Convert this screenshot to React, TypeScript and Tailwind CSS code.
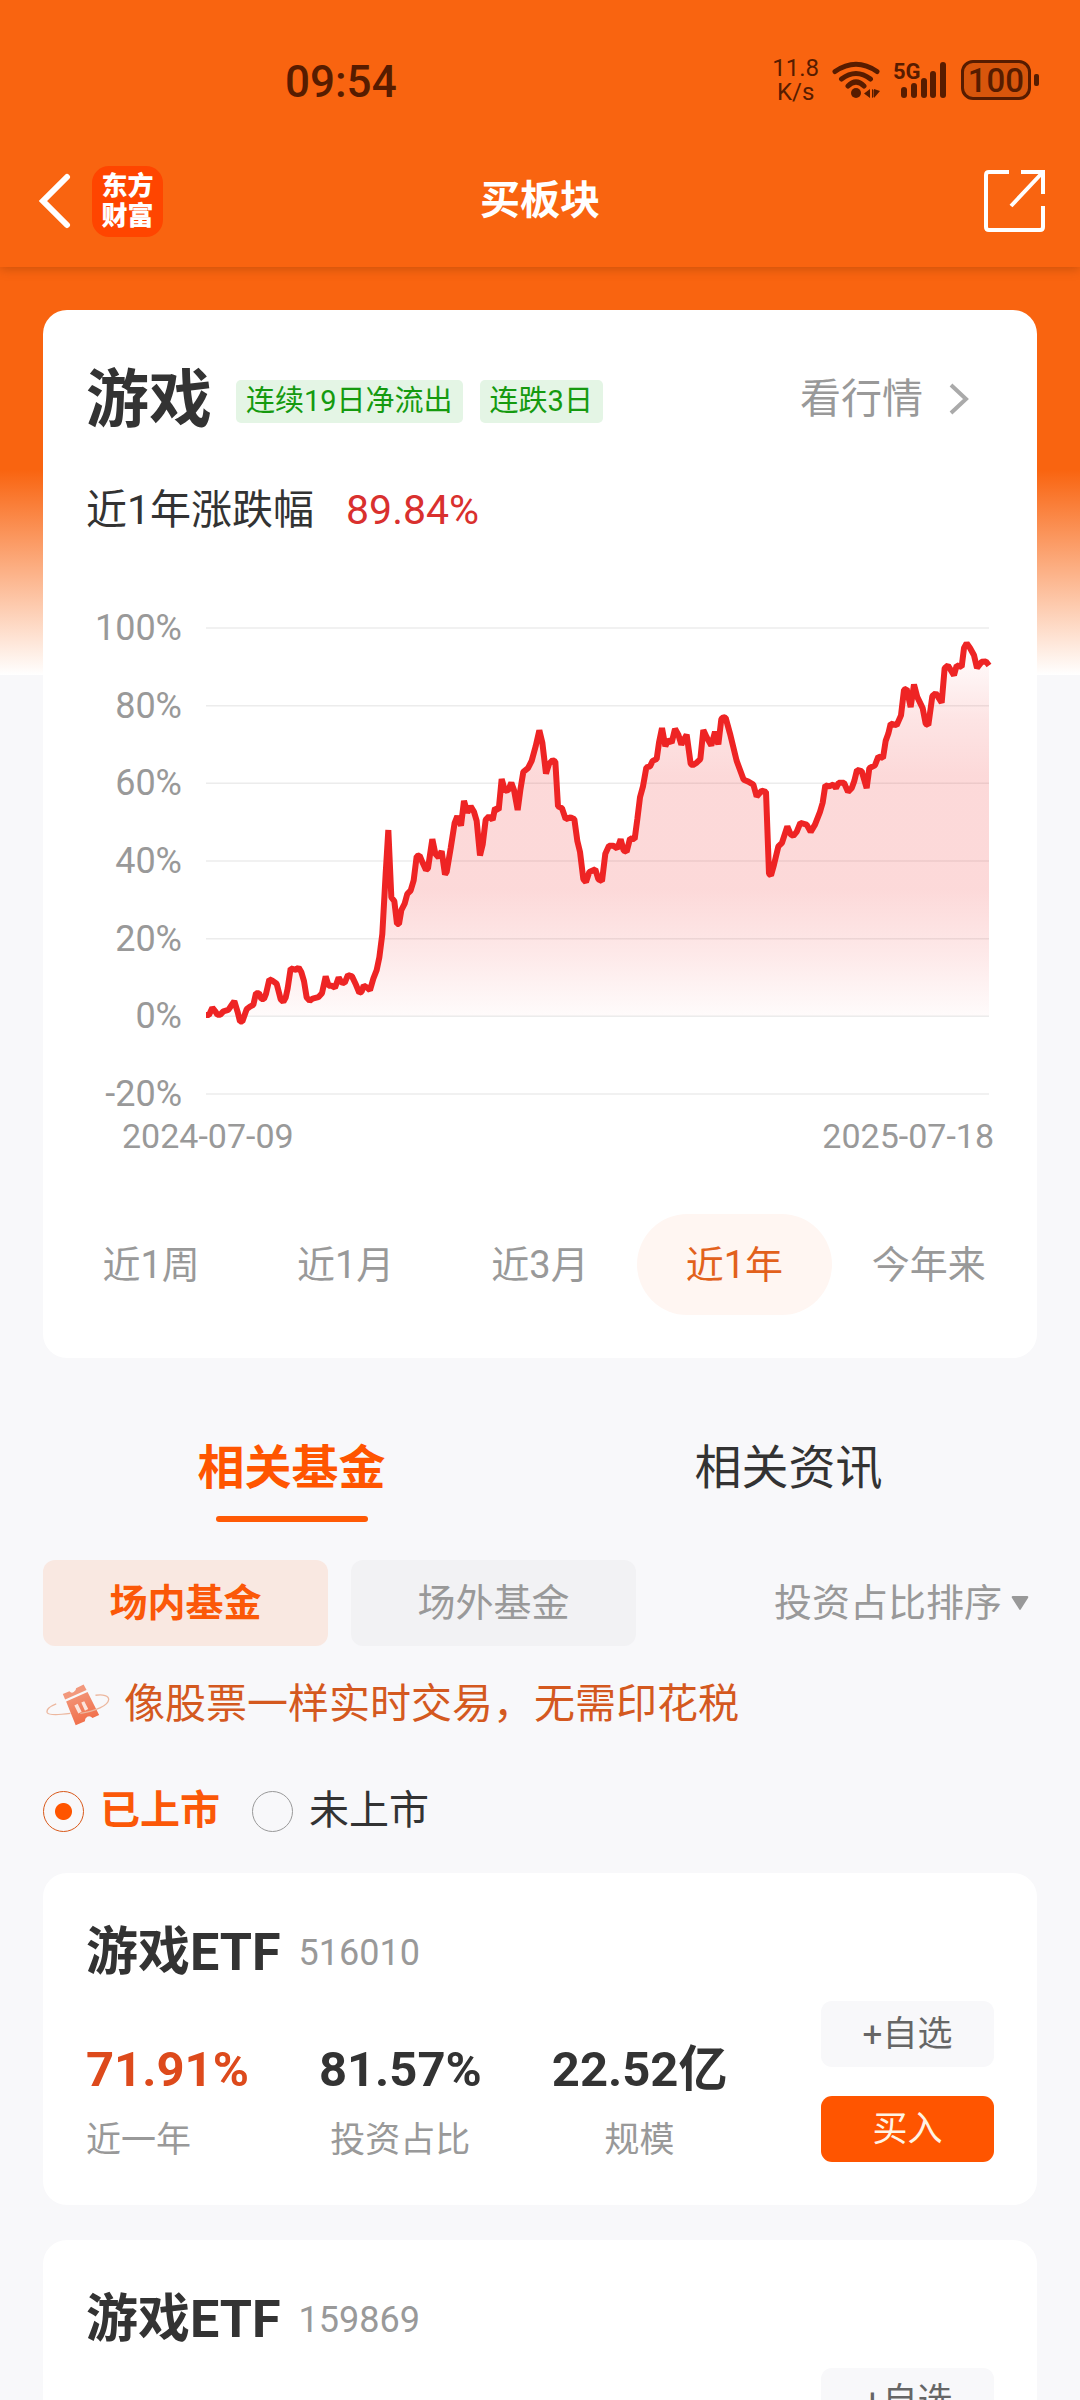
import { useState } from "react";

const AXIS = ["100%", "80%", "60%", "40%", "20%", "0%", "-20%"];

// Chart space: x 438..2787, y 105 (100%) .. 1385 (-20%)
const SERIES =
  "438,1168 447,1168 457,1148 466,1158 472,1167 481,1167 490,1158 505,1154 514,1142 523,1130 533,1160 540,1186 547,1186 560,1152 570,1145 580,1140 588,1108 597,1108 604,1124 612,1124 618,1110 628,1070 636,1073 650,1082 662,1125 670,1132 677,1120 683,1095 692,1040 700,1042 708,1044 716,1038 724,1050 732,1075 740,1120 749,1129 758,1123 775,1119 786,1108 797,1062 806,1088 816,1088 825,1093 836,1065 844,1078 854,1080 864,1058 876,1062 888,1085 898,1107 905,1104 911,1087 920,1092 930,1100 940,1068 950,1045 958,1010 967,945 977,780 985,660 994,845 1003,855 1011,918 1017,918 1024,880 1034,862 1042,835 1052,826 1061,798 1070,732 1079,730 1088,750 1098,770 1104,765 1117,685 1126,725 1136,735 1145,718 1155,782 1160,775 1172,710 1184,640 1192,622 1203,648 1212,580 1222,612 1232,595 1242,610 1250,635 1260,730 1268,700 1277,632 1287,622 1298,632 1305,600 1316,605 1325,520 1335,552 1345,550 1354,530 1362,550 1373,605 1381,550 1390,500 1404,490 1415,470 1427,430 1438,386 1447,420 1458,505 1467,478 1478,468 1486,472 1494,595 1506,600 1517,630 1532,625 1543,630 1552,690 1560,720 1570,795 1578,803 1588,775 1606,768 1615,795 1626,800 1636,725 1647,703 1660,703 1672,711 1682,685 1691,716 1700,720 1710,683 1724,685 1732,630 1740,570 1749,540 1759,488 1770,485 1778,470 1790,465 1797,420 1806,380 1816,430 1825,412 1835,420 1845,382 1855,398 1864,425 1880,398 1892,478 1898,482 1910,475 1921,465 1930,385 1940,405 1954,428 1965,390 1975,425 1984,355 1990,350 1997,352 2010,395 2030,470 2051,522 2065,527 2080,535 2090,568 2105,552 2118,555 2127,780 2133,785 2142,755 2155,705 2166,695 2182,650 2192,672 2200,676 2210,665 2221,640 2240,645 2252,665 2265,645 2280,610 2288,585 2296,537 2308,540 2320,535 2328,545 2336,530 2352,530 2364,555 2375,545 2383,525 2391,495 2405,498 2420,545 2428,490 2445,482 2455,458 2469,462 2477,415 2485,395 2492,368 2510,372 2523,345 2532,275 2540,272 2552,322 2562,260 2572,295 2588,325 2597,368 2605,372 2617,292 2627,284 2645,310 2654,215 2664,208 2682,235 2690,208 2705,212 2712,160 2720,147 2730,160 2742,180 2751,215 2765,198 2778,197 2787,208";

const RANGES = ["近1周", "近1月", "近3月", "近1年", "今年来"];

type Fund = { name: string; code: string; year: string; ratio: string; scale: string };

const FUNDS: Fund[] = [
  { name: "游戏ETF", code: "516010", year: "71.91%", ratio: "81.57%", scale: "22.52亿" },
  { name: "游戏ETF", code: "159869", year: "--", ratio: "--", scale: "--" },
];

function StatusBar() {
  return (
    <div className="flex h-[160px] items-center justify-between pl-[285px] pr-[41px] text-[#571c00]">
      <span className="pt-1 text-[44px] font-medium leading-none">09:54</span>
      <div className="flex items-center gap-[13px]">
        <div className="text-center text-[24px] leading-6">
          <div>11.8</div>
          <div>K/s</div>
        </div>
        <svg viewBox="0 0 48 38" className="h-[38px] w-[48px]" fill="none" stroke="currentColor" strokeWidth="5" strokeLinecap="round">
          <path d="M3 10.500Q24 -4 45 10.500M9.500 18Q24 7 38.500 18M16 25Q24 17 32 25" />
          <circle cx="24" cy="32" r="5" fill="currentColor" stroke="none" />
          <path d="M38 28v9l-6-4.500zM40 28v9l1.500-1v-7zM42 28v9l6-7z" fill="currentColor" stroke="none" />
        </svg>
        <svg viewBox="0 0 55 38" className="h-[38px] w-[55px] overflow-visible" fill="currentColor">
          <text x="0" y="18" fontFamily="Roboto" fontWeight="700" fontSize="22">5G</text>
          <rect x="8" y="26" width="6" height="11" rx="3" />
          <rect x="18" y="22" width="6" height="15" rx="3" />
          <rect x="28" y="17" width="6" height="20" rx="3" />
          <rect x="37" y="10" width="6" height="27" rx="3" />
          <rect x="47" y="1" width="6" height="36" rx="3" />
        </svg>
        <div className="flex items-center gap-[3px]">
          <div className="flex h-10 w-[70px] items-center justify-center rounded-[12px] border-[3px] border-current bg-[#571c00]/20 text-[33px] font-medium leading-none">
            100
          </div>
          <div className="h-3 w-[5px] rounded-[2px] bg-current" />
        </div>
      </div>
    </div>
  );
}

function NavBar() {
  return (
    <div className="grid h-[107px] grid-cols-[1fr_auto_1fr] items-center px-[34px] pb-[25px] text-white">
      <div className="flex items-center gap-[20px]">
        <button aria-label="返回" className="pl-1">
          <svg viewBox="0 0 34 56" className="h-[56px] w-[34px]" fill="none" stroke="currentColor" strokeWidth="6" strokeLinecap="round">
            <path d="M29 4L5 28L29 52" strokeLinejoin="miter" />
          </svg>
        </button>
        <a href="#home" className="flex size-[71px] flex-col items-center justify-center rounded-[17px] bg-[#ff4500] text-[26px] font-black leading-[30px]">
          <span>东方</span>
          <span>财富</span>
        </a>
      </div>
      <h1 className="text-[40px] font-bold leading-none">买板块</h1>
      <button aria-label="分享" className="justify-self-end">
        <svg viewBox="0 0 63 64" className="h-[64px] w-[63px]" fill="none" stroke="currentColor" strokeWidth="4">
          <path d="M26 3H6Q3 3 3 6V58Q3 61 6 61H57Q60 61 60 58V37M38 3H60V25M60 3L28 37" />
        </svg>
      </button>
    </div>
  );
}

function Chart() {
  return (
    <div>
      <div className="flex">
        <div className="-my-4 flex w-[96px] shrink-0 flex-col justify-between text-right text-[36px] leading-8 text-[#999]">
          {AXIS.map((a) => (
            <span key={a}>{a}</span>
          ))}
        </div>
        <svg viewBox="438 105 2349 1280" preserveAspectRatio="none" className="ml-6 mr-[5px] h-[466px] min-w-0 flex-1 overflow-visible">
          <defs>
            <linearGradient id="area" x1="0" y1="0" x2="0" y2="1">
              <stop offset="0" stopColor="#f02020" stopOpacity="0" />
              <stop offset="0.2" stopColor="#f02020" stopOpacity="0.12" />
              <stop offset="0.35" stopColor="#f02020" stopOpacity="0.17" />
              <stop offset="0.65" stopColor="#f02020" stopOpacity="0.17" />
              <stop offset="0.82" stopColor="#f02020" stopOpacity="0.1" />
              <stop offset="1" stopColor="#f02020" stopOpacity="0.01" />
            </linearGradient>
          </defs>
          {AXIS.map((a, i) => (
            <line key={a} x1="438" x2="2787" y1={105 + (i * 1280) / 6} y2={105 + (i * 1280) / 6} stroke="#ececec" strokeWidth="1.500" vectorEffect="non-scaling-stroke" />
          ))}
          <polygon points={`438,1170 ${SERIES} 2787,1170`} fill="url(#area)" />
          <polyline points={SERIES} fill="none" stroke="#ee2424" strokeWidth="6" strokeLinejoin="bevel" vectorEffect="non-scaling-stroke" />
        </svg>
      </div>
      <div className="mt-6 flex justify-between pl-9 text-[34px] leading-9 text-[#999]">
        <span>2024-07-09</span>
        <span>2025-07-18</span>
      </div>
    </div>
  );
}

function SectorCard() {
  const [range, setRange] = useState("近1年");
  return (
    <section className="rounded-[24px] bg-white px-[43px] pb-[43px] pt-[53px]">
      <div className="flex h-[72px] items-center">
        <h2 className="text-[63px] font-bold leading-none text-[#333]">游戏</h2>
        <div className="mt-[5px] flex flex-1 gap-[17px] pl-[24px] text-[29px] leading-[43px] text-[#159a0f]">
          <span className="rounded-[5px] bg-[#e4f5e5] px-[10px]">连续19日净流出</span>
          <span className="rounded-[5px] bg-[#e4f5e5] px-[10px]">连跌3日</span>
        </div>
        <a href="#quote" className="flex items-center gap-[26px] pr-[25px] text-[41px] leading-none text-[#999]">
          看行情
          <svg viewBox="0 0 20 32" className="h-8 w-5" fill="none" stroke="#aaa" strokeWidth="4">
            <path d="M2 2L17 16L2 30" />
          </svg>
        </a>
      </div>
      <p className="mt-[45px] flex h-[60px] items-center gap-[32px] text-[41px] leading-none text-[#333]">
        近1年涨跌幅 <span className="text-[#d9302e]">89.84%</span>
      </p>
      <div className="mt-[88px]">
        <Chart />
      </div>
      <div className="-mx-8 mt-[60px] grid grid-cols-5">
        {RANGES.map((r) => (
          <button
            key={r}
            onClick={() => setRange(r)}
            className={`h-[101px] rounded-full text-[38px] leading-none ${r === range ? "bg-[#fff6f2] text-[#e2611c]" : "text-[#999]"}`}
          >
            {r}
          </button>
        ))}
      </div>
    </section>
  );
}

function TicketIcon() {
  return (
    <svg viewBox="16 30 194 134" className="h-[45px] w-[64px] shrink-0">
      <defs>
        <linearGradient id="ticket" x1="0" y1="0" x2="0.4" y2="1">
          <stop offset="0" stopColor="#f29a7e" />
          <stop offset="1" stopColor="#f16f4a" />
        </linearGradient>
      </defs>
      <path d="M47 95C25 103 16 114 20 122C24 129 50 129 90 124" fill="none" stroke="#ecb79e" strokeWidth="4" />
      <path d="M67 65L87 57Q93 64 100 59Q108 55 107 48L130 36L139 53L74 82Z" fill="#f2987c" />
      <path d="M77 88L142 59L177 129L157 138Q150 130 141 134Q133 139 134 148L106 160Z" fill="url(#ticket)" />
      <path d="M102 100L112 95L124 119L114 124ZM123 91L132 87L144 111L134 116Z" fill="#fbe4dc" />
      <path d="M120 124C165 118 205 100 206 82C206 70 190 66 166 69" fill="none" stroke="#ecb79e" strokeWidth="4" />
    </svg>
  );
}

function FundCard({ fund }: { fund: Fund }) {
  return (
    <article className="flex h-[332px] justify-between rounded-[24px] bg-white px-[43px] pt-[50px]">
      <div>
        <h3 className="flex h-[60px] items-center gap-[18px] text-[52px] font-bold leading-none text-[#333]">
          {fund.name} <span className="text-[36px] font-normal text-[#999]">{fund.code}</span>
        </h3>
        <dl className="mt-[51px] grid grid-cols-[auto_auto_auto] gap-x-[70px] text-center">
          <Stat label="近一年" value={fund.year} tone="text-left text-[#dd4a1c]" />
          <Stat label="投资占比" value={fund.ratio} tone="text-[#333]" />
          <Stat label="规模" value={fund.scale} tone="text-[#333]" />
        </dl>
      </div>
      <div className="mt-[78px] flex flex-col gap-[29px] text-[35px] leading-none">
        <button className="h-[66px] w-[173px] rounded-[11px] bg-[#f8f8fa] text-[#666]">+自选</button>
        <button className="h-[66px] w-[173px] rounded-[11px] bg-[#ff5500] text-[#fff3e4]">买入</button>
      </div>
    </article>
  );
}

function Stat({ label, value, tone }: { label: string; value: string; tone: string }) {
  return (
    <div className={`flex flex-col ${tone}`}>
      <dd className="text-[49px] font-bold leading-[71px]">{value}</dd>
      <dt className="order-last text-[35px] leading-[71px] text-[#999]">{label}</dt>
    </div>
  );
}

export default function App() {
  const [tab, setTab] = useState("相关基金");
  const [market, setMarket] = useState("场内基金");
  const [listed, setListed] = useState("已上市");
  return (
    <div className="flex h-screen flex-col overflow-hidden bg-[linear-gradient(to_bottom,#f96410_470px,#ffffff_675px,#f8f8fa_675px)] font-[Roboto,'Noto_Sans_CJK_SC',sans-serif]">
      <header className="shrink-0 bg-[#f96410] shadow-[0_2px_10px_rgba(120,50,0,0.35)]">
        <StatusBar />
        <NavBar />
      </header>
      <main className="min-h-0 flex-1 overflow-y-auto px-[43px] pt-[43px] [scrollbar-width:none]">
        <SectorCard />
        <div role="tablist" className="mt-[74px] grid grid-cols-2 text-[47px] leading-none">
          {["相关基金", "相关资讯"].map((t) => (
            <button key={t} role="tab" aria-selected={t === tab} onClick={() => setTab(t)} className="flex h-[90px] flex-col items-center justify-between pt-3">
              <span className={t === tab ? "font-bold text-[#ff5500]" : "text-[#333]"}>{t}</span>
              <span className={`h-[6px] w-[152px] rounded-full ${t === tab ? "bg-[#ff5a05]" : ""}`} />
            </button>
          ))}
        </div>
        <div className="mt-[38px] flex items-center text-[38px] leading-none">
          <div className="flex gap-[23px]">
            {["场内基金", "场外基金"].map((m) => (
              <button
                key={m}
                onClick={() => setMarket(m)}
                className={`h-[86px] w-[285px] rounded-[12px] ${m === market ? "bg-[#f9e8e1] font-bold text-[#fb5808]" : "bg-[#f2f2f4] text-[#999]"}`}
              >
                {m}
              </button>
            ))}
          </div>
          <label className="ml-auto flex items-center gap-2 pr-[8px] text-[#999]">
            <select aria-label="排序" className="h-[60px] appearance-none bg-transparent">
              <option>投资占比排序</option>
            </select>
            <svg viewBox="0 0 18 15" className="h-[15px] w-[18px]" fill="#999">
              <path d="M2 0H16Q18 0 17 2L10 13Q9 15 8 13L1 2Q0 0 2 0Z" />
            </svg>
          </label>
        </div>
        <div className="mt-[28px] flex h-[60px] items-center gap-[14px] pl-[3px] text-[41px] leading-none text-[#d4591f]">
          <TicketIcon />
          <p>像股票一样实时交易，无需印花税</p>
        </div>
        <div className="mt-[47px] flex h-[60px] items-center gap-[32px] text-[40px] leading-none">
          {["已上市", "未上市"].map((l) => (
            <label key={l} className={`flex items-center gap-[16px] ${l === listed ? "font-bold text-[#fb5808]" : "text-[#333]"}`}>
              <input
                type="radio"
                name="listed"
                checked={l === listed}
                onChange={() => setListed(l)}
                className="size-[41px] appearance-none rounded-full border border-[#999] checked:border-[#d9591a] checked:bg-[radial-gradient(circle,#ff5500_8px,transparent_9px)]"
              />
              {l}
            </label>
          ))}
        </div>
        <div className="mt-[32px] flex flex-col gap-[35px]">
          {FUNDS.map((f) => (
            <FundCard key={f.code} fund={f} />
          ))}
        </div>
      </main>
    </div>
  );
}
